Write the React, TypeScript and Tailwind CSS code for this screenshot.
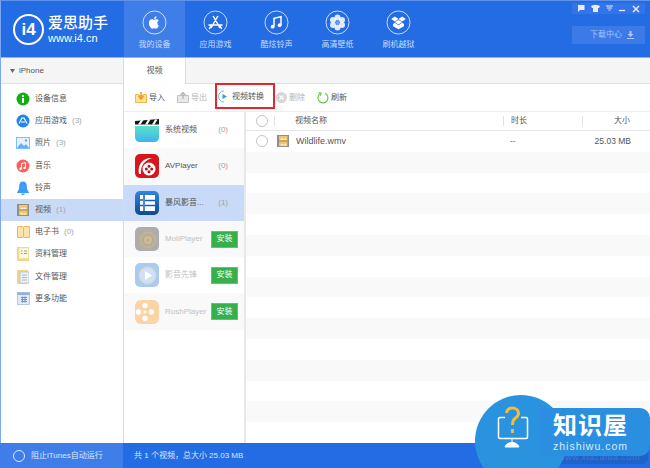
import type { ReactNode } from "react";

const cjk = "font-['Liberation_Sans','Noto_Sans_CJK_SC',sans-serif]";

const Ring = ({ children }: { children: ReactNode }) => (
  <svg width="25" height="25" viewBox="0 0 25 25" fill="none">
    <circle cx="12.5" cy="12.5" r="11.5" stroke="#ffffff" strokeOpacity="0.75" />
    {children}
  </svg>
);

const navItems: { label: string; active?: boolean; icon: ReactNode }[] = [
  {
    label: "我的设备",
    active: true,
    icon: (
      <Ring>
        <path
          d="M15.4 12.9c0-1.6 1.3-2.3 1.4-2.4-.8-1.1-1.9-1.3-2.3-1.3-1-.1-1.9.6-2.4.6s-1.3-.6-2.1-.6c-1.1 0-2.1.6-2.6 1.6-1.1 1.9-.3 4.8.8 6.3.5.8 1.1 1.6 1.9 1.6s1.1-.5 2-.5 1.2.5 2 .5 1.4-.8 1.9-1.5c.6-.9.8-1.7.8-1.8-.1 0-1.4-.6-1.4-2.5zM13.9 8.2c.4-.5.7-1.2.6-1.9-.6 0-1.4.4-1.8.9-.4.4-.7 1.2-.6 1.8.7.1 1.3-.3 1.8-.8z"
          fill="#ffffff"
        />
      </Ring>
    ),
  },
  {
    label: "应用游戏",
    icon: (
      <Ring>
        <path
          d="M10.4 6.5l6.3 11M14.6 6.5l-6.3 11M6 15h13M16.5 15l2 3.5M8.5 15l-2 3.5"
          stroke="#ffffff"
          strokeWidth="1.5"
          strokeLinecap="round"
        />
      </Ring>
    ),
  },
  {
    label: "酷炫铃声",
    icon: (
      <Ring>
        <path d="M10 16.5V8.3l7-1.5v8.2" stroke="#ffffff" strokeWidth="1.5" />
        <circle cx="8.6" cy="16.7" r="1.9" fill="#ffffff" />
        <circle cx="15.6" cy="15.2" r="1.9" fill="#ffffff" />
      </Ring>
    ),
  },
  {
    label: "高清壁纸",
    icon: (
      <Ring>
        <g fill="#ffffff" fillOpacity="0.85">
          <circle cx="12.5" cy="7.5" r="3" />
          <circle cx="12.5" cy="17.5" r="3" />
          <circle cx="8" cy="10" r="3" />
          <circle cx="17" cy="10" r="3" />
          <circle cx="8" cy="15" r="3" />
          <circle cx="17" cy="15" r="3" />
        </g>
        <circle cx="12.5" cy="12.5" r="1.5" fill="#7ea8ee" />
      </Ring>
    ),
  },
  {
    label: "刷机越狱",
    icon: (
      <Ring>
        <path
          d="M8.8 6.5l3.7 2.5-3.7 2.5L5.2 9zM16.2 6.5L19.8 9l-3.6 2.5L12.5 9zM8.8 12.1l3.7-2 3.7 2-3.7 2.5zM7 14l1.8-1.2 3.7 2.4 3.7-2.4L18 14v2.3l-5.5 3-5.5-3z"
          fill="#ffffff"
        />
      </Ring>
    ),
  },
];

function FilmIcon({ size }: { size: number }) {
  return (
    <svg width={size} height={size} viewBox="0 0 12 12">
      <rect width="12" height="12" fill="#8f8f8f" />
      <rect x="2" y="1" width="8.5" height="4.5" fill="#f3c460" />
      <rect x="2" y="6.5" width="8.5" height="4.5" fill="#f3c460" />
      <path d="M3 5l2-2 1.5 1.5L8 3l2 2zM3 10.5l2-2 1.5 1.5L8 8.5l2 2z" fill="#fff3d0" />
    </svg>
  );
}

const sideItems: { label: string; count?: string; active?: boolean; icon: ReactNode }[] = [
  {
    label: "设备信息",
    icon: (
      <svg width="14" height="14" viewBox="0 0 14 14">
        <circle cx="7" cy="7" r="6.5" fill="#10b010" />
        <rect x="6" y="6" width="2" height="5" fill="#ffffff" />
        <rect x="6" y="3" width="2" height="2" fill="#ffffff" />
      </svg>
    ),
  },
  {
    label: "应用游戏",
    count: "(3)",
    icon: (
      <svg width="14" height="14" viewBox="0 0 14 14">
        <circle cx="7" cy="7" r="6.5" fill="#1f86ee" />
        <path d="M3 9.5l3-5.5h2l3 5.5M5 8h4" stroke="#ffffff" strokeWidth="1.2" fill="none" />
      </svg>
    ),
  },
  {
    label: "照片",
    count: "(3)",
    icon: (
      <svg width="14" height="12" viewBox="0 0 14 12">
        <rect width="14" height="12" fill="#7cc0fa" />
        <rect x="1" y="1" width="12" height="10" fill="#e6f3fe" />
        <path d="M1 11l4-5 3 3 2-2 3 4z" fill="#63aef5" />
        <circle cx="10" cy="3.5" r="1.2" fill="#63aef5" />
      </svg>
    ),
  },
  {
    label: "音乐",
    icon: (
      <svg width="14" height="14" viewBox="0 0 14 14">
        <circle cx="7" cy="7" r="6.5" fill="#f4635f" />
        <path d="M5.5 9.5V4.5l4-.8v5" stroke="#ffffff" strokeWidth="1" fill="none" />
        <circle cx="4.5" cy="9.7" r="1.2" fill="#ffffff" />
        <circle cx="8.5" cy="8.9" r="1.2" fill="#ffffff" />
      </svg>
    ),
  },
  {
    label: "铃声",
    icon: (
      <svg width="14" height="14" viewBox="0 0 14 14">
        <path
          d="M7 .5c2.6 0 3.8 2 3.8 4.5 0 3 .7 4.5 2.2 6.2v.8H1v-.8C2.5 9.5 3.2 8 3.2 5 3.2 2.5 4.4.5 7 .5zM5.2 12.5h3.600C8.600 13.500 8 14 7 14s-1.600-.5-1.800-1.500z"
          fill="#3d9df5"
        />
      </svg>
    ),
  },
  {
    label: "视频",
    count: "(1)",
    active: true,
    icon: <FilmIcon size={12} />,
  },
  {
    label: "电子书",
    count: "(0)",
    icon: (
      <svg width="13" height="12" viewBox="0 0 13 12">
        <path d="M.5.5H6l.5 1 .5-1h5.500v11H7l-.5-.5-.5.5H.5z" fill="#fbe2ae" stroke="#f0b766" />
        <path d="M6.5 1.5V11" stroke="#f0b766" />
      </svg>
    ),
  },
  {
    label: "资料管理",
    icon: (
      <svg width="12" height="14" viewBox="0 0 12 14">
        <rect width="12" height="14" fill="#f4d67e" />
        <rect x="2" y="1" width="9.5" height="10.5" fill="#fdf8df" stroke="#e9dfb6" strokeWidth="0.5" />
        <path d="M4 4h1.5M7 4h3M4 6.5h1.5M7 6.5h3" stroke="#9c9c8a" />
      </svg>
    ),
  },
  {
    label: "文件管理",
    icon: (
      <svg width="12" height="14" viewBox="0 0 12 14">
        <rect width="11" height="14" fill="#f4d67e" />
        <rect x="3" y="2" width="9" height="11" fill="#eef1f8" stroke="#a9b9d6" strokeWidth="0.7" />
        <path d="M5 5h5M5 7.5h5M5 10h5" stroke="#a9b9d6" />
      </svg>
    ),
  },
  {
    label: "更多功能",
    icon: (
      <svg width="13" height="13" viewBox="0 0 13 13">
        <rect width="12" height="12" x="0.5" y="0.5" fill="#e5eaf2" stroke="#a5b3c8" strokeWidth="0.7" />
        <rect x="0.5" y="0.5" width="12" height="2.5" fill="#8fb1df" />
        <path d="M4 5.5h6M4 7.5h6M4 9.5h6M5.5 4.5v6M8 4.5v6" stroke="#5e90d6" strokeWidth="0.9" />
      </svg>
    ),
  },
];

const appItems: {
  label: string;
  count?: string;
  active?: boolean;
  alt?: boolean;
  install?: boolean;
  icon: ReactNode;
}[] = [
  {
    label: "系统视频",
    count: "(0)",
    icon: (
      <svg width="24" height="24" viewBox="0 0 24 24">
        <defs>
          <linearGradient id="clapper" x1="0" y1="0" x2="0" y2="1">
            <stop offset="0" stopColor="#5be2c8" />
            <stop offset="1" stopColor="#3fb4ee" />
          </linearGradient>
        </defs>
        <path d="M0 8h24v11c0 3-2 5-5 5H5c-3 0-5-2-5-5z" fill="url(#clapper)" />
        <path d="M0 3l24-2v5.5H0z" fill="#161616" />
        <path d="M3 6.5L6 2h2.5l-3 4.5zM10 6.5l3-5h2.500l-3 5zM17 6.5l3-5h2.500l-3 5z" fill="#ffffff" />
      </svg>
    ),
  },
  {
    label: "AVPlayer",
    count: "(0)",
    alt: true,
    icon: (
      <svg width="24" height="24" viewBox="0 0 24 24">
        <rect width="24" height="24" rx="5" fill="#d5161e" />
        <path d="M4 20C2 11 8 3 18 4 11 5 5 11 6 20z" fill="#ffffff" />
        <circle cx="14" cy="15" r="6.5" fill="#ffffff" />
        <circle cx="14" cy="12.3" r="1.5" fill="#b50f17" />
        <circle cx="14" cy="17.7" r="1.5" fill="#b50f17" />
        <circle cx="11.3" cy="15" r="1.5" fill="#b50f17" />
        <circle cx="16.7" cy="15" r="1.5" fill="#b50f17" />
      </svg>
    ),
  },
  {
    label: "暴风影音...",
    count: "(1)",
    active: true,
    icon: (
      <svg width="24" height="24" viewBox="0 0 24 24">
        <defs>
          <linearGradient id="storm" x1="0" y1="0" x2="0" y2="1">
            <stop offset="0" stopColor="#2f86dc" />
            <stop offset="1" stopColor="#0d4a94" />
          </linearGradient>
        </defs>
        <rect width="24" height="24" rx="5" fill="url(#storm)" />
        <rect x="5" y="4" width="15" height="16" fill="#ffffff" />
        <path d="M9 4v16" stroke="#1760b6" strokeWidth="1.5" />
        <path d="M5 9h3M5 14.5h3M10 9.5h10M10 14.5h10" stroke="#1760b6" strokeWidth="1.5" />
      </svg>
    ),
  },
  {
    label: "MoliPlayer",
    alt: true,
    install: true,
    icon: (
      <svg width="24" height="24" viewBox="0 0 24 24">
        <rect width="24" height="24" rx="5" fill="#adadad" />
        <circle cx="13" cy="13" r="7.5" fill="none" stroke="#cfb57a" strokeWidth="1.5" />
        <circle cx="13" cy="13" r="4" fill="#d6bc80" />
        <path d="M11.5 10.8l3.5 2.2-3.5 2.2z" fill="#adadad" />
      </svg>
    ),
  },
  {
    label: "影音先锋",
    install: true,
    icon: (
      <svg width="24" height="24" viewBox="0 0 24 24">
        <rect width="24" height="24" rx="5" fill="#a9c9f7" />
        <circle cx="12.5" cy="12.5" r="8.5" fill="#cfe0fa" stroke="#d9d9a6" strokeWidth="1.3" />
        <path d="M10 8l7 4.5-7 4.5z" fill="#ffffff" />
      </svg>
    ),
  },
  {
    label: "RushPlayer",
    alt: true,
    install: true,
    icon: (
      <svg width="24" height="24" viewBox="0 0 24 24">
        <rect width="24" height="24" rx="6" fill="#fbd3a5" />
        <circle cx="10" cy="5.5" r="2.7" fill="#ffffff" />
        <circle cx="10" cy="18.5" r="2.7" fill="#ffffff" />
        <circle cx="3.5" cy="12" r="2.7" fill="#ffffff" />
        <circle cx="16.5" cy="12" r="2.7" fill="#ffffff" />
        <circle cx="10" cy="12" r="1.5" fill="#ffffff" />
      </svg>
    ),
  },
];

const ToolButton = ({ label, icon, muted }: { label: string; icon: ReactNode; muted?: boolean }) => (
  <div className={`flex items-center gap-[2px] text-[8px] ${muted ? "text-[#b5b5b5]" : "text-[#555555]"}`}>
    {icon}
    <span>{label}</span>
  </div>
);

const Check = () => (
  <div className="w-[12px] h-[12px] rounded-full border border-[#c4c4c4] bg-white shrink-0" />
);

export default function App() {
  return (
    <div className={`relative w-[650px] h-[468px] overflow-hidden flex flex-col bg-white ${cjk}`}>
      {/* top bar */}
      <header className="h-[58px] shrink-0 flex bg-[#236ce4] border-l border-l-[#7aa8f0] border-t border-t-[#5d93ec] border-b border-b-[#8fb5f0]">
        <div className="w-[123px] shrink-0 flex items-center pl-[12px] gap-[4px] text-white">
          <div className="w-[31px] h-[31px] rounded-full border-[2px] border-white flex items-center justify-center text-[17px] font-bold leading-none font-['Liberation_Sans',sans-serif]">
            i4
          </div>
          <div className="flex flex-col">
            <span className="text-[15px] leading-[18px] font-medium">爱思助手</span>
            <span className="text-[11px] leading-[12px] font-['Liberation_Sans',sans-serif]">www.i4.cn</span>
          </div>
        </div>
        {navItems.map((n) => (
          <div
            key={n.label}
            className={`w-[61px] flex flex-col items-center pt-[9px] ${n.active ? "bg-[#3f7ee8]" : ""}`}
          >
            {n.icon}
            <span className="mt-[4px] text-[8px] leading-[11px] text-[#c9dcfa]">{n.label}</span>
          </div>
        ))}
        <div className="flex-1 flex flex-col items-end pr-[5px] pt-[2px]">
          <div className="w-[73px] h-[11px] bg-[#3474e6] flex items-center justify-around px-[2px]">
            <svg width="8" height="7" viewBox="0 0 8 7">
              <path d="M1 0h6.500v5H3L1 7z" fill="#e3edfc" />
            </svg>
            <svg width="9" height="7" viewBox="0 0 9 7">
              <path d="M0 1l2.500-1h4L9 1 8 3H7v4H2V3H1z" fill="#e3edfc" />
            </svg>
            <svg width="7" height="7" viewBox="0 0 7 7">
              <path d="M0 1h7M1 3h5M2.500 5h2" stroke="#e3edfc" />
            </svg>
            <svg width="7" height="7" viewBox="0 0 7 7">
              <path d="M0 5.500h6" stroke="#e3edfc" strokeWidth="1.3" />
            </svg>
            <svg width="8" height="8" viewBox="0 0 8 8">
              <path d="M1 1l6 6M7 1L1 7" stroke="#e3edfc" strokeWidth="1.5" />
            </svg>
          </div>
          <div className="mt-[12px] w-[73px] h-[18px] bg-[#3c7ae8] flex items-center justify-end pr-[11px] gap-[5px] text-[8px] text-[#a9c6f5]">
            <span>下载中心</span>
            <svg width="7" height="8" viewBox="0 0 7 8">
              <path d="M2.500 0h2v3H6.500L3.500 6 .5 3H2.500zM0 7h7v1H0z" fill="#a9c6f5" />
            </svg>
          </div>
        </div>
      </header>

      <div className="flex-1 flex min-h-0">
        {/* left nav */}
        <aside className="w-[124px] shrink-0 flex flex-col border-l border-l-[#7aa8f0] border-r border-r-[#dcdcdc]">
          <div className="h-[26px] shrink-0 bg-[#f5f5f5] border-b border-[#e2e2e2] flex items-center pl-[9px] gap-[4px] text-[8px] text-[#555555]">
            <svg width="5" height="4" viewBox="0 0 5 4">
              <path d="M0 0h5L2.500 4z" fill="#666666" />
            </svg>
            <span>iPhone</span>
          </div>
          <div className="pt-[4px]">
            {sideItems.map((s) => (
              <div
                key={s.label}
                className={`h-[22.2px] flex items-center text-[8px] text-[#555555] ${s.active ? "bg-[#c9daf6]" : ""}`}
              >
                <div className="ml-[15px] w-[14px] shrink-0 flex justify-center">{s.icon}</div>
                <span className="ml-[5px]">{s.label}</span>
                {s.count && <span className="ml-[5px] text-[#a5a5a5]">{s.count}</span>}
              </div>
            ))}
          </div>
        </aside>

        <main className="flex-1 min-w-0 flex flex-col">
          {/* tabs */}
          <div className="h-[26px] shrink-0 flex bg-[#f5f5f5] border-b border-[#dedede]">
            <div className="w-[62px] h-[26px] bg-white border-r border-[#dedede] flex items-center justify-center text-[8px] text-[#555555]">
              视频
            </div>
          </div>

          {/* toolbar */}
          <div className="h-[28px] shrink-0 flex items-center pl-[11px] border-b border-[#eeeeee]">
            <ToolButton
              label="导入"
              icon={
                <svg width="12" height="11" viewBox="0 0 12 11">
                  <path d="M.5 2.500h3v1h5v-1h3v8h-11z" fill="#fbe39b" stroke="#efb74f" />
                  <path d="M6 0v6M3.500 4L6 7l2.500-3" stroke="#ea9c1c" strokeWidth="1.5" fill="none" />
                </svg>
              }
            />
            <div className="ml-[12px]">
              <ToolButton
                muted
                label="导出"
                icon={
                  <svg width="12" height="11" viewBox="0 0 12 11">
                    <path d="M.5 3.500h11v7h-11z" fill="#e8e8e8" stroke="#c4c4c4" />
                    <path d="M6 7V1M3.500 3L6 .5 8.500 3" stroke="#b5b5b5" strokeWidth="1.3" fill="none" />
                  </svg>
                }
              />
            </div>
            <div className="ml-[8px] w-[60px] h-[26px] -mt-[4px] pt-[2px] border-[2px] border-[#e5262c] flex items-center pl-[1px]">
              <ToolButton
                label="视频转换"
                icon={
                  <svg width="12" height="13" viewBox="0 0 12 13">
                    <path d="M6 1a5.500 5.500 0 1 0 0 11" stroke="#5cc0d8" strokeWidth="1" fill="none" />
                    <path d="M4.500 4l4.500 2.500L4.500 9z" fill="#2fa0cf" />
                  </svg>
                }
              />
            </div>
            <div className="ml-[1px]">
              <ToolButton
                muted
                label="删除"
                icon={
                  <svg width="11" height="11" viewBox="0 0 11 11">
                    <circle cx="5.5" cy="5.5" r="5.5" fill="#d6d6d6" />
                    <path d="M3.500 3.500l4 4M7.500 3.500l-4 4" stroke="#ffffff" strokeWidth="1.2" />
                  </svg>
                }
              />
            </div>
            <div className="ml-[12px]">
              <ToolButton
                label="刷新"
                icon={
                  <svg width="12" height="12" viewBox="0 0 12 12" fill="none">
                    <path d="M3.500 1.500a5 5 0 1 0 4.500-.2" stroke="#5cc43c" strokeWidth="1.1" />
                    <path d="M1.500 .8l2.500.3-.5 2.600" stroke="#5cc43c" strokeWidth="1.1" />
                  </svg>
                }
              />
            </div>
          </div>

          <div className="flex-1 flex min-h-0">
            {/* app list */}
            <div className="w-[122px] shrink-0 border-r-[2px] border-[#e8e8e8]">
              {appItems.map((a) => (
                <div
                  key={a.label}
                  className={`h-[36.3px] flex items-center pl-[11px] text-[8px] ${
                    a.active ? "bg-[#c8daf8]" : a.alt ? "bg-[#f9f9f9]" : "bg-white"
                  }`}
                >
                  <div className="shrink-0 w-[24px] h-[24px]">{a.icon}</div>
                  <span className={`ml-[6px] flex-1 whitespace-nowrap ${a.install ? "text-[#c2c2c2]" : "text-[#555555]"}`}>
                    {a.label}
                  </span>
                  {a.count && <span className="mr-[16px] text-[#a0a0a0]">{a.count}</span>}
                  {a.install && (
                    <div className="mr-[6px] w-[27px] h-[17px] shrink-0 bg-[#35b04a] border border-[#5fc46f] text-white flex items-center justify-center">
                      安装
                    </div>
                  )}
                </div>
              ))}
            </div>

            {/* table */}
            <div className="flex-1 min-w-0 flex flex-col">
              <div className="h-[19px] shrink-0 flex items-center text-[8px] text-[#555555] border-b border-[#e6e6e6]">
                <div className="w-[28px] shrink-0 pl-[10px]">
                  <Check />
                </div>
                <div className="w-[1px] h-[10px] bg-[#e2e2e2]" />
                <span className="ml-[20px] w-[208px] shrink-0">视频名称</span>
                <div className="w-[1px] h-[10px] bg-[#e2e2e2]" />
                <span className="ml-[7px] w-[71px] shrink-0">时长</span>
                <div className="w-[1px] h-[10px] bg-[#e2e2e2]" />
                <span className="flex-1 text-right pr-[20px]">大小</span>
              </div>
              {Array.from({ length: 15 }).map((_, i) => (
                <div
                  key={i}
                  className={`h-[20.8px] shrink-0 flex items-center text-[8px] text-[#555555] ${i % 2 ? "bg-[#f9f9f9]" : "bg-white"}`}
                >
                  {i === 0 && (
                    <>
                      <div className="w-[31px] shrink-0 pl-[10px]">
                        <Check />
                      </div>
                      <FilmIcon size={12} />
                      <span className="ml-[7px] w-[214px] shrink-0 text-[9px]">Wildlife.wmv</span>
                      <span className="w-[60px] shrink-0">--</span>
                      <span className="flex-1 text-right pr-[19px] text-[8.5px]">25.03 MB</span>
                    </>
                  )}
                </div>
              ))}
            </div>
          </div>
        </main>
      </div>

      {/* status bar */}
      <footer className="h-[25px] shrink-0 flex items-center bg-[#236ce4] text-[8px] text-[#dbe7fb]">
        <div className="w-[123px] h-full shrink-0 bg-[#3f7ee8] flex items-center pl-[13px] gap-[6px]">
          <div className="w-[12px] h-[12px] rounded-full border border-[#dbe7fb]" />
          <span>阻止iTunes自动运行</span>
        </div>
        <span className="ml-[11px]">共 1 个视频，总大小 25.03 MB</span>
      </footer>

      {/* watermark */}
      <div className="absolute left-[530px] top-[448px] w-[118px] h-[16px] rounded-[6px] bg-[#1f62c8] flex items-end justify-end pr-[8px] text-[9px] tracking-[0.5px] text-[#3b7ad8] font-['Liberation_Sans',sans-serif]">
        www.xiazaiba.com
      </div>
      <div className="absolute left-[475px] top-[395px] w-[92px] h-[92px] rounded-full bg-[#2a93e0]" />
      <div className="absolute left-[540px] top-[408px] w-[110px] h-[48px] rounded-r-[10px] bg-[#2a8fe0] flex flex-col items-start pl-[13px] pt-[4px] text-white">
        <span className="text-[24px] leading-[28px] font-bold tracking-[1px]">知识屋</span>
        <span className="text-[10.5px] leading-[12px] tracking-[1px] text-[#d8ecfb] font-['Liberation_Sans',sans-serif]">zhishiwu.com</span>
      </div>
      <svg className="absolute left-[496px] top-[405px]" width="36" height="44" viewBox="0 0 36 44" fill="none">
        <path d="M9 12.5H4c-1 0-1.500.5-1.500 1.500v18c0 1 .5 1.500 1.500 1.500h26c1 0 1.500-.5 1.500-1.500V14c0-1-.5-1.500-1.500-1.500h-5" stroke="#ffffff" strokeWidth="1.5" />
        <path d="M16 33v5M9 42c1-3 3.500-4.500 7-4.500s6 1.500 7 4.500z" fill="#ffffff" stroke="#ffffff" />
        <path d="M10.500 8c.5-3 3-5 6-5 3.500 0 6 2.500 6 5.500 0 2.500-1.500 3.500-3.500 5-2 1.500-2.500 3-2.500 6.500" stroke="#f6bb2e" strokeWidth="3" />
        <rect x="15" y="24" width="3" height="4" fill="#f6bb2e" />
      </svg>
    </div>
  );
}
